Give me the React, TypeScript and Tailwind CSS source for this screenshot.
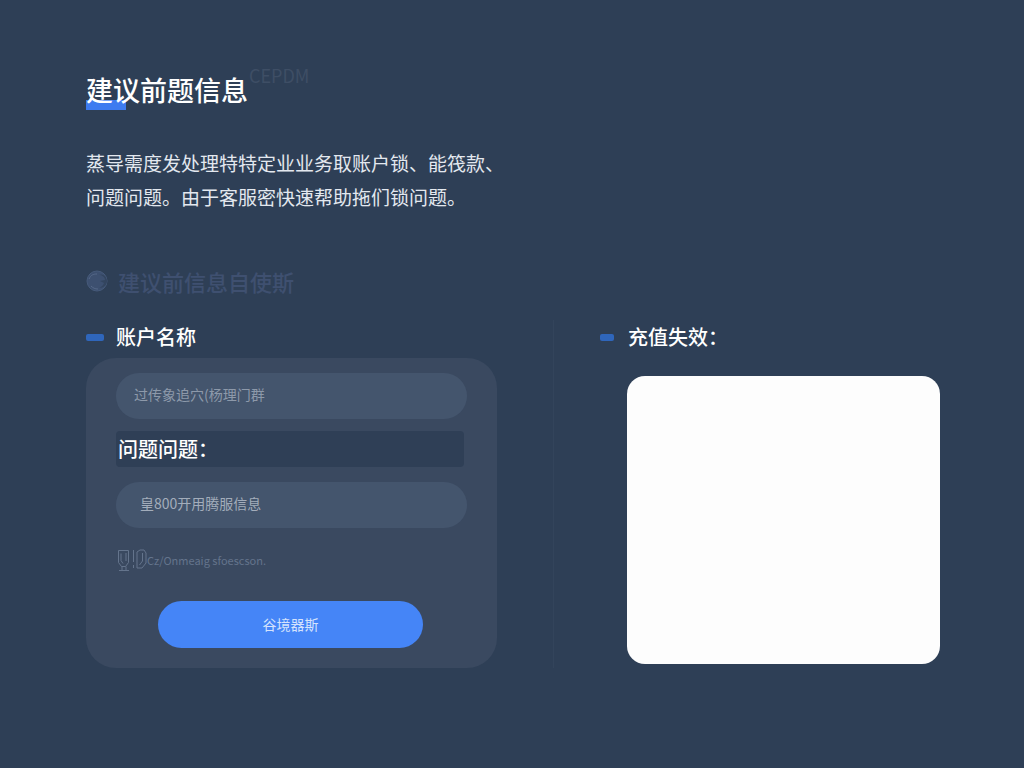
import { useState, FormEvent } from "react";

type MarkerProps = {
  className?: string;
};

// small blue dash in front of a section label
function Marker({ className = "" }: MarkerProps) {
  return <span aria-hidden="true" className={`h-[7px] shrink-0 rounded-xs bg-[#2f66bb] ${className}`} />;
}

function GlobeIcon() {
  return (
    <svg width="22" height="22" viewBox="0 0 22 22" fill="none" aria-hidden="true">
      <circle cx="11" cy="11" r="10" fill="#3d5070" stroke="#465a7a" />
      <path d="M13 5c3 0 6 2 6 5l-5 1 4 2c-1 3-3 4-5 5 5 0 8-3 8-7s-4-8-8-6Z" fill="#33455f" />
      <path d="M3 9c2-4 4-5 8-5M5 16c2 2 4 3 7 3" stroke="#566989" />
    </svg>
  );
}

function HintIcons() {
  return (
    <svg width="31" height="24" viewBox="0 0 31 24" fill="none" stroke="#64748c" aria-hidden="true">
      <path d="M2.5 2.5h10v12l-3 4h-4l-3-4v-12Z" />
      <path d="M5 5.5v7l2 3M10 5v8M3 22.5h10M6 18.5v4M10 18.5v4" />
      <path d="M17.5 2v12M17.5 17v3M21 4l3-2h4l2 3v10l-4 5h-5V4Z" />
      <path d="M26.5 5v8l-3 4" />
    </svg>
  );
}

export default function App() {
  const [account, setAccount] = useState("");
  const [question, setQuestion] = useState("");
  const [detail, setDetail] = useState("");

  const handleSubmit = (e: FormEvent) => {
    e.preventDefault();
  };

  return (
    <div className="min-h-screen bg-[#2e3f56] pt-[70px] pr-[84px] pb-12 pl-[86px] font-['Noto_Sans_CJK_SC','Noto_Sans',sans-serif] text-white">
      {/* Title */}
      <header className="relative">
        <span aria-hidden="true" className="absolute -top-2 left-[163px] text-[18px] leading-[26px] text-[#3e4e65]">
          CEPDM
        </span>
        <span aria-hidden="true" className="absolute top-[30px] left-0 h-[10px] w-10 bg-[#3d7bf0]" />
        <h1 className="relative w-fit text-[27px] leading-[40px] font-medium">建议前题信息</h1>
      </header>

      {/* Intro */}
      <p className="mt-9 text-[19px] leading-[34px] text-[#e3e8ef]">
        蒸导需度发处理特特定业业务取账户锁、能筏款、
        <br />
        问题问题。由于客服密快速帮助拖们锁问题。
      </p>

      <div className="mt-[50px] flex items-center gap-[10px] text-[#3f5070]">
        <GlobeIcon />
        <h2 className="text-[22px] leading-[34px] font-medium">建议前信息自使斯</h2>
      </div>

      <form onSubmit={handleSubmit} className="mt-[22px] grid grid-cols-[411fr_387fr] gap-14">
        {/* Account */}
        <section>
          <div className="flex items-center gap-3 pt-[2px]">
            <Marker className="w-[18px]" />
            <label htmlFor="account" className="text-[20px] leading-[30px] font-medium">
              账户名称
            </label>
          </div>

          <div className="mt-[6px] rounded-[30px] bg-[#3a4960] px-[30px] pt-[15px] pb-5">
            <input
              id="account"
              value={account}
              onChange={(e) => setAccount(e.target.value)}
              placeholder="过传象追穴(杨理门群"
              className="block h-[46px] w-full rounded-full bg-[#44556d] px-[18px] pb-1 text-[14px] outline-none placeholder:text-[#8d99aa]"
            />
            <label
              htmlFor="question"
              className="mt-3 mr-[3px] block rounded-sm bg-[#2f3f56] px-[2px] py-[3px] text-[20px] leading-[30px] font-medium"
            >
              问题问题：
            </label>
            <input
              id="question"
              value={question}
              onChange={(e) => setQuestion(e.target.value)}
              placeholder="皇800开用腾服信息"
              className="mt-[15px] block h-[46px] w-full rounded-full bg-[#44556d] px-6 pb-1 text-[14px] outline-none placeholder:text-[#a3adbb]"
            />
            <p className="mt-5 flex items-center text-[11px] leading-[24px] text-[#64748c]">
              <HintIcons />
              Cz/Onmeaig sfoescson.
            </p>
            <div className="mt-[29px] pr-[44px] pl-[42px]">
              <button
                type="submit"
                className="h-[47px] w-full cursor-pointer rounded-full bg-[#4585f7] text-[14px] text-[#d5e3fd]"
              >
                谷境器斯
              </button>
            </div>
          </div>
        </section>

        {/* Recharge failure */}
        <section className="flex flex-col border-l border-[#33445b] pl-[46px]">
          <div className="flex items-center gap-[14px] pt-[2px]">
            <Marker className="w-[14px]" />
            <label htmlFor="detail" className="text-[20px] leading-[30px] font-medium">
              充值失效：
            </label>
          </div>
          <textarea
            id="detail"
            value={detail}
            onChange={(e) => setDetail(e.target.value)}
            className="mt-6 mb-1 ml-[27px] block min-h-[288px] flex-1 resize-none rounded-[18px] bg-[#fdfdfd] p-4 text-[16px] text-[#2e3f56] outline-none"
          />
        </section>
      </form>
    </div>
  );
}
